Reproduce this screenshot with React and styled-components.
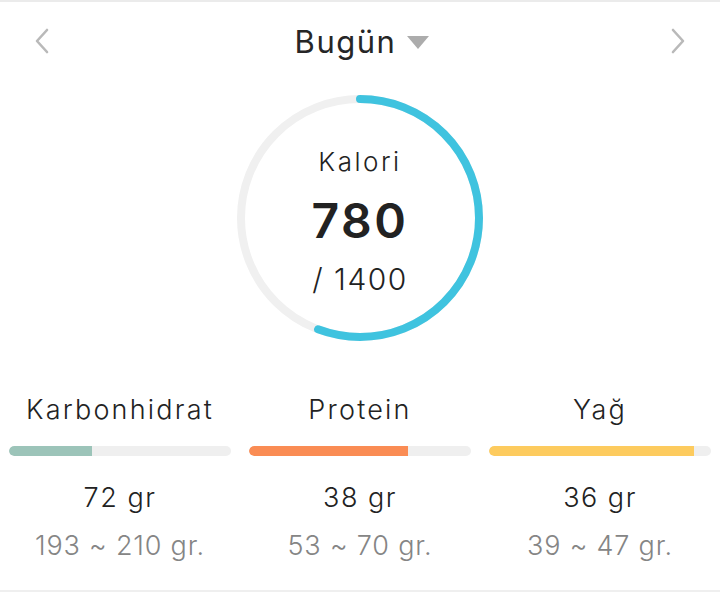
import React from "react";
import styled, { createGlobalStyle } from "styled-components";

const Global = createGlobalStyle`
  html, body { margin: 0; padding: 0; background: #fff; }
  body { font-family: Inter, Lato, sans-serif; }
`;

const Page = styled.div`
  width: 720px;
  height: 592px;
  box-sizing: border-box;
  border-top: 2px solid #ebebeb;
  border-bottom: 2px solid #efefef;
  display: flex;
  flex-direction: column;
  color: #222;
`;

const Header = styled.div`
  display: flex;
  align-items: center;
  justify-content: space-between;
  height: 78px;
  padding: 0 32px 0 32px;
`;

const NavButton = styled.button`
  border: none;
  background: none;
  padding: 0;
  width: 20px;
  height: 28px;
  display: flex;
  align-items: center;
  justify-content: center;
  cursor: pointer;
`;

const Title = styled.div`
  display: flex;
  align-items: center;
  gap: 11px;
  font-size: 31px;
  font-weight: 400;
  color: #262626;
  letter-spacing: 1.5px;
  margin-left: 4px;
`;

const Caret = styled.span`
  width: 0;
  height: 0;
  border-left: 11px solid transparent;
  border-right: 11px solid transparent;
  border-top: 13px solid #acacac;
  margin-top: 2px;
`;

const RingWrap = styled.div`
  align-self: center;
  display: grid;
  width: 246px;
  height: 246px;
  margin-top: 15px;
  & > * { grid-area: 1 / 1; }
`;

const RingText = styled.div`
  display: flex;
  flex-direction: column;
  align-items: center;
  justify-content: center;
  padding-top: 7px;
`;

const RingLabel = styled.div`
  font-size: 26px;
  font-weight: 350;
  letter-spacing: 2.5px;
  line-height: 32px;
`;

const RingValue = styled.div`
  font-size: 48px;
  font-weight: 600;
  line-height: 58px;
  margin-top: 14px;
  letter-spacing: 2.5px;
`;

const RingGoal = styled.div`
  font-size: 30px;
  font-weight: 350;
  line-height: 36px;
  margin-top: 11px;
  letter-spacing: 1.5px;
`;

const Macros = styled.div`
  display: grid;
  grid-template-columns: repeat(3, 1fr);
  column-gap: 18px;
  padding: 0 9px;
  margin-top: 54px;
`;

const Macro = styled.div`
  display: flex;
  flex-direction: column;
  align-items: center;
`;

const MacroName = styled.div`
  font-size: 27px;
  font-weight: 350;
  line-height: 30px;
  letter-spacing: 2.2px;
`;

const Track = styled.div`
  align-self: stretch;
  height: 10px;
  border-radius: 5px;
  background: #efefef;
  margin-top: 21px;
  overflow: hidden;
  display: flex;
`;

const Fill = styled.div`
  height: 100%;
  background: ${(p) => p.$color};
  border-radius: 5px 0 0 5px;
`;

const Amount = styled.div`
  font-size: 27px;
  font-weight: 350;
  line-height: 30px;
  margin-top: 27px;
  letter-spacing: 1.5px;
`;

const Range = styled.div`
  font-size: 27px;
  font-weight: 350;
  line-height: 30px;
  margin-top: 18px;
  color: #858585;
  letter-spacing: 0.8px;
`;

const Chevron = ({ dir }) => (
  <svg width="16" height="26" viewBox="0 0 16 26">
    <path
      d={dir === "left" ? "M13 2 L3 13 L13 24" : "M3 2 L13 13 L3 24"}
      fill="none"
      stroke="#b9b9b9"
      strokeWidth="2.6"
      strokeLinecap="round"
      strokeLinejoin="round"
    />
  </svg>
);

const R = 119;
const C = 2 * Math.PI * R;

const Ring = ({ value, goal }) => {
  const frac = Math.min(value / goal, 1);
  return (
    <svg width="246" height="246" viewBox="0 0 246 246">
      <circle cx="123" cy="123" r={R} fill="none" stroke="#f0f0f0" strokeWidth="8" />
      <circle
        cx="123"
        cy="123"
        r={R}
        fill="none"
        stroke="#3fc3df"
        strokeWidth="8"
        strokeLinecap="round"
        strokeDasharray={`${frac * C} ${C}`}
        transform="rotate(-90 123 123)"
      />
    </svg>
  );
};

const macros = [
  { name: "Karbonhidrat", value: 72, min: 193, max: 210, color: "#9cc4b9" },
  { name: "Protein", value: 38, min: 53, max: 70, color: "#fa8c54" },
  { name: "Yağ", value: 36, min: 39, max: 47, color: "#fdcb5e" },
];

export default function App() {
  return (
    <>
      <Global />
      <Page>
        <Header>
          <NavButton aria-label="Önceki">
            <Chevron dir="left" />
          </NavButton>
          <Title>
            Bugün
            <Caret />
          </Title>
          <NavButton aria-label="Sonraki">
            <Chevron dir="right" />
          </NavButton>
        </Header>
        <RingWrap>
          <Ring value={780} goal={1400} />
          <RingText>
            <RingLabel>Kalori</RingLabel>
            <RingValue>780</RingValue>
            <RingGoal>/ 1400</RingGoal>
          </RingText>
        </RingWrap>
        <Macros>
          {macros.map((m) => (
            <Macro key={m.name}>
              <MacroName>{m.name}</MacroName>
              <Track>
                <Fill
                  $color={m.color}
                  style={{ width: `${Math.min(m.value / m.min, 1) * 100}%` }}
                />
              </Track>
              <Amount>{m.value} gr</Amount>
              <Range>
                {m.min} ~ {m.max} gr.
              </Range>
            </Macro>
          ))}
        </Macros>
      </Page>
    </>
  );
}
